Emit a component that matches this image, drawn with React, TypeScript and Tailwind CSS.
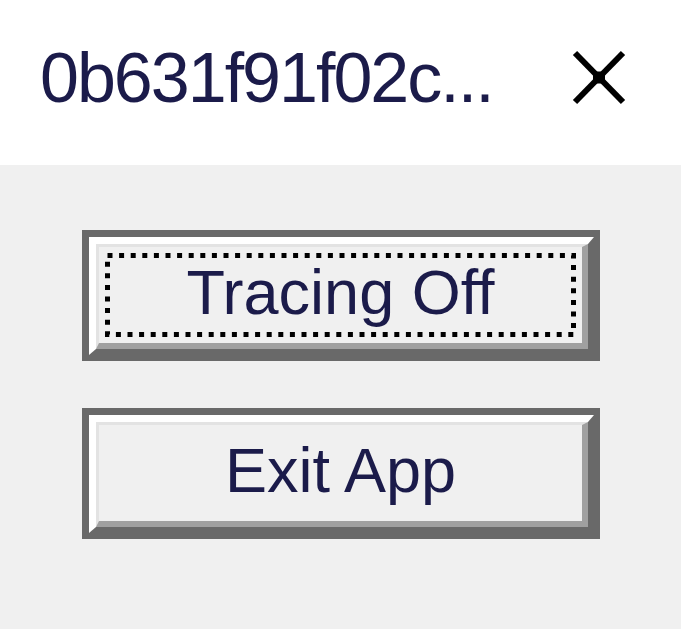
import React from 'react';

const WinButton: React.FC<{ label: string; focused?: boolean }> = ({ label, focused }) => {
  return (
    <div className="w-[518px] h-[131px] border-t-[7px] border-l-[7px] border-r-[6px] border-b-[6px] border-[#696969] bg-[#696969]">
      <div className="w-full h-full flex border-t-[7px] border-l-[7px] border-t-white border-l-white border-r-[6px] border-b-[6px] border-r-[#696969] border-b-[#696969]">
        <div className="flex-1 flex border-t-[3px] border-l-[3px] border-t-[#e3e3e3] border-l-[#e3e3e3] border-r-[6px] border-b-[6px] border-r-[#a0a0a0] border-b-[#a0a0a0] bg-[#f0f0f0]">
          <div className="relative flex-1 m-[6px] flex items-center justify-center">
            {/* focus rectangle */}
            {focused && (
              <svg className="absolute inset-0" width="471" height="84" viewBox="0 0 471 84">
                <rect
                  x="2.5"
                  y="2.5"
                  width="466"
                  height="79"
                  fill="none"
                  stroke="#000"
                  strokeWidth="5"
                  strokeDasharray="5 6.6"
                />
              </svg>
            )}
            <span className="font-['Liberation_Sans',Arial,sans-serif] text-[63px] leading-none text-[#1b1b4a] -mt-[6px]">
              {label}
            </span>
          </div>
        </div>
      </div>
    </div>
  );
};

const App: React.FC = () => {
  return (
    <div className="w-[681px] h-[629px] flex flex-col bg-[#f0f0f0] overflow-hidden">
      {/* Title bar */}
      <div className="h-[165px] bg-white flex items-center justify-between pl-[40px] pr-[55px]">
        <span className="font-['Liberation_Sans',Arial,sans-serif] text-[70px] tracking-[-2px] leading-none text-[#1b1b4a] -mt-[10px]">
          0b631f91f02c...
        </span>
        <svg width="54" height="55" viewBox="0 0 54 55" className="-mt-[10px]">
          <line x1="3" y1="3" x2="51" y2="52" stroke="#000" strokeWidth="6" />
          <line x1="51" y1="3" x2="3" y2="52" stroke="#000" strokeWidth="6" />
          <rect x="21" y="21.5" width="12" height="12" fill="#000" />
        </svg>
      </div>

      {/* Body */}
      <div className="flex-1 flex flex-col gap-[47px] pt-[65px] pl-[82px]">
        <WinButton label="Tracing Off" focused />
        <WinButton label="Exit App" />
      </div>
    </div>
  );
};

export default App;
